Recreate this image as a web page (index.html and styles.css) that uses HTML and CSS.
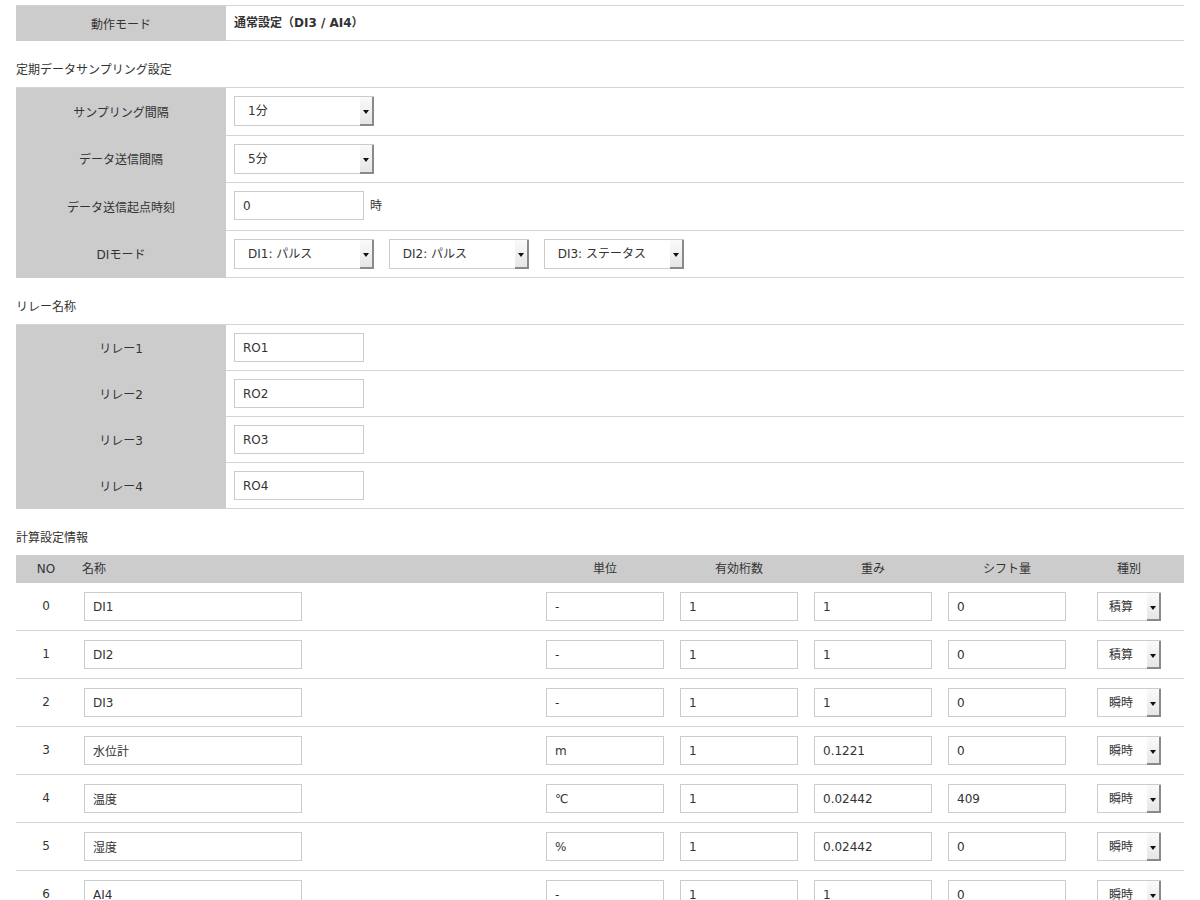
FILE: index.html
```html
<!doctype html>
<html>
<head>
<meta charset="utf-8">
<title>設定</title>
<link rel="stylesheet" href="styles.css">
</head>
<body>
<div class="page">

<table class="form">
<tr><th>動作モード</th><td class="strong">通常設定（DI3 / AI4）</td></tr>
</table>

<div class="section">定期データサンプリング設定</div>
<table class="form tall">
<tr><th>サンプリング間隔</th><td><span class="sel"><select class="w140"><option>1分</option></select></span></td></tr>
<tr><th>データ送信間隔</th><td><span class="sel"><select class="w140"><option>5分</option></select></span></td></tr>
<tr><th>データ送信起点時刻</th><td><input type="text" class="w130" value="0"><span class="unit">時</span></td></tr>
<tr><th>DIモード</th><td>
<span class="sel"><select class="w140"><option>DI1: パルス</option></select></span>
<span class="sel"><select class="w140"><option>DI2: パルス</option></select></span>
<span class="sel"><select class="w140"><option>DI3: ステータス</option></select></span>
</td></tr>
</table>

<div class="section">リレー名称</div>
<table class="form">
<tr><th>リレー1</th><td><input type="text" class="w130" value="RO1"></td></tr>
<tr><th>リレー2</th><td><input type="text" class="w130" value="RO2"></td></tr>
<tr><th>リレー3</th><td><input type="text" class="w130" value="RO3"></td></tr>
<tr><th>リレー4</th><td><input type="text" class="w130" value="RO4"></td></tr>
</table>

<div class="section">計算設定情報</div>
<table class="calc">
<colgroup><col class="c-no"><col><col class="c-num"><col class="c-num"><col class="c-num"><col class="c-num"><col class="c-kind"></colgroup>
<tr><th>NO</th><th class="name">名称</th><th>単位</th><th>有効桁数</th><th>重み</th><th>シフト量</th><th>種別</th></tr>
<tr><td>0</td><td class="name"><input type="text" class="wname" value="DI1"></td><td><input type="text" class="wnum" value="-"></td><td><input type="text" class="wnum" value="1"></td><td><input type="text" class="wnum" value="1"></td><td><input type="text" class="wnum" value="0"></td><td><span class="sel"><select class="wkind"><option>積算</option></select></span></td></tr>
<tr><td>1</td><td class="name"><input type="text" class="wname" value="DI2"></td><td><input type="text" class="wnum" value="-"></td><td><input type="text" class="wnum" value="1"></td><td><input type="text" class="wnum" value="1"></td><td><input type="text" class="wnum" value="0"></td><td><span class="sel"><select class="wkind"><option>積算</option></select></span></td></tr>
<tr><td>2</td><td class="name"><input type="text" class="wname" value="DI3"></td><td><input type="text" class="wnum" value="-"></td><td><input type="text" class="wnum" value="1"></td><td><input type="text" class="wnum" value="1"></td><td><input type="text" class="wnum" value="0"></td><td><span class="sel"><select class="wkind"><option>瞬時</option></select></span></td></tr>
<tr><td>3</td><td class="name"><input type="text" class="wname" value="水位計"></td><td><input type="text" class="wnum" value="m"></td><td><input type="text" class="wnum" value="1"></td><td><input type="text" class="wnum" value="0.1221"></td><td><input type="text" class="wnum" value="0"></td><td><span class="sel"><select class="wkind"><option>瞬時</option></select></span></td></tr>
<tr><td>4</td><td class="name"><input type="text" class="wname" value="温度"></td><td><input type="text" class="wnum" value="℃"></td><td><input type="text" class="wnum" value="1"></td><td><input type="text" class="wnum" value="0.02442"></td><td><input type="text" class="wnum" value="409"></td><td><span class="sel"><select class="wkind"><option>瞬時</option></select></span></td></tr>
<tr><td>5</td><td class="name"><input type="text" class="wname" value="湿度"></td><td><input type="text" class="wnum" value="%"></td><td><input type="text" class="wnum" value="1"></td><td><input type="text" class="wnum" value="0.02442"></td><td><input type="text" class="wnum" value="0"></td><td><span class="sel"><select class="wkind"><option>瞬時</option></select></span></td></tr>
<tr><td>6</td><td class="name"><input type="text" class="wname" value="AI4"></td><td><input type="text" class="wnum" value="-"></td><td><input type="text" class="wnum" value="1"></td><td><input type="text" class="wnum" value="1"></td><td><input type="text" class="wnum" value="0"></td><td><span class="sel"><select class="wkind"><option>瞬時</option></select></span></td></tr>
</table>

</div>
</body>
</html>
```

FILE: styles.css
```css
body{
margin:0;
background:#fff;
color:#333;
font-family:"DejaVu Sans","Noto Sans CJK JP",sans-serif;
font-size:12px;
}
.page{
padding:5px 16px;
}
table{
border-collapse:collapse;
width:100%;
}
.form{
border-top:1px solid #d4d4d4;
}
.form th{
width:210px;
background-color:#ccc;
font-weight:normal;
text-align:center;
padding:0;
}
.form td{
padding:8px 8px;
height:29px;
border-bottom:1px solid #d4d4d4;
line-height:29px;
}
.form.tall td{
height:30.5px;
line-height:30.5px;
}
.form td.strong{
font-weight:bold;
height:18px;
line-height:18px;
}
.section{
padding:20px 0 8px 0;
line-height:18px;
}
input[type="text"],select{
font-family:inherit;
font-size:12px;
color:#333;
box-sizing:border-box;
border:1px solid #ccc;
background:#fff;
margin:0;
vertical-align:top;
outline:none;
}
input[type="text"]{
height:29px;
padding:0 8px;
}
select{
-webkit-appearance:none;
appearance:none;
height:30px;
padding:0 18px 0 13px;
border-radius:0;
}
.sel{
position:relative;
display:inline-block;
vertical-align:top;
height:30px;
margin-right:11px;
}
.sel:after{
content:"";
position:absolute;
top:1px;
right:0;
bottom:0;
width:14px;
background:linear-gradient(#fafafa,#e6e6e6);
border-right:2px solid #8a8a8a;
border-bottom:2px solid #8a8a8a;
box-sizing:border-box;
pointer-events:none;
}
.sel:before{
content:"";
position:absolute;
top:50%;
right:5px;
margin-top:-1px;
border-top:4px solid #111;
border-left:3px solid transparent;
border-right:3px solid transparent;
z-index:1;
pointer-events:none;
}
.w140{width:140px;}
.w130{width:130px;}
.wname{width:218px;}
.wnum{width:118px;}
.wkind{width:64px;padding-left:11px;}
.unit{
margin-left:6px;
vertical-align:top;
}
.calc{
table-layout:fixed;
}
.c-no{width:60px;}
.c-num{width:134px;}
.c-kind{width:110px;}
.calc th{
background-color:#ccc;
font-weight:normal;
height:28px;
line-height:28px;
padding:0;
text-align:center;
}
.calc td{
text-align:center;
padding:9px 0;
height:29px;
line-height:29px;
border-bottom:1px solid #d4d4d4;
}
.calc .sel{
height:29px;
}
.calc select{
height:29px;
}
.calc .name{
text-align:left;
padding-left:8px;
}
.calc th.name{
padding-left:6px;
}
.calc .sel{
margin-right:0;
}
```
